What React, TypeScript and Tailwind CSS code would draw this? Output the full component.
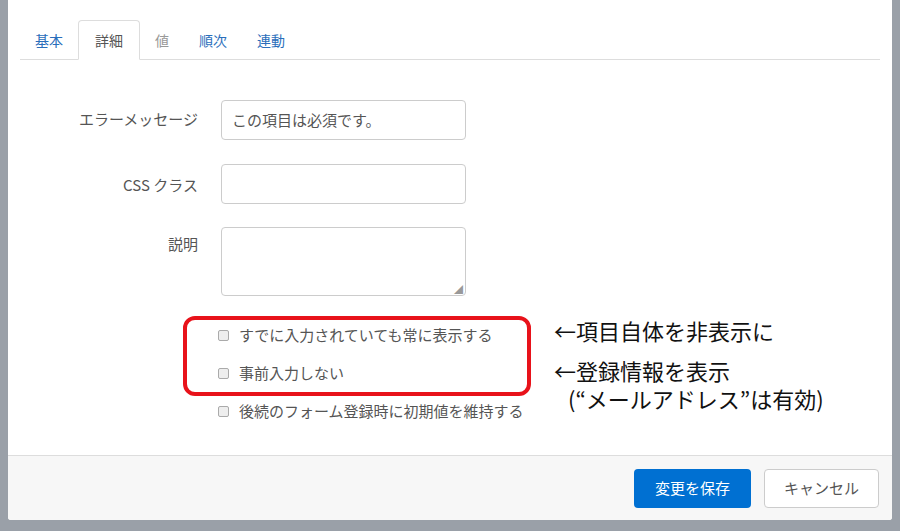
import React from "react";

const font = { fontFamily: '"Noto Sans CJK JP", "Noto Sans", sans-serif' };

function Check({ label }: { label: string }) {
  return (
    <div className="flex items-center h-[38px] text-[15px] text-[#555]">
      <span className="w-[11px] h-[11px] border border-[#aaa] bg-[#eee] rounded-[2px] mr-[10px]" />
      {label}
    </div>
  );
}

export default function App() {
  const tabs = ["基本", "詳細", "値", "順次", "連動"];
  return (
    <div style={font} className="w-[900px] h-[531px] bg-[#9aa0a8] relative overflow-hidden">
      <div className="absolute left-[8px] top-0 w-[884px] h-[520px] bg-white rounded-b-[3px] flex flex-col">
        <div className="mx-[12px] mt-[20px] flex border-b border-[#ddd] h-[40px]">
          {tabs.map((t, i) => (
            <div
              key={t}
              className={
                "px-[15px] flex items-center text-[14px] -mb-px " +
                (i === 1
                  ? "border border-[#ddd] border-b-white rounded-t-[4px] bg-white text-[#555] px-[16px]"
                  : i === 2
                  ? "text-[#999]"
                  : "text-[#2a6ebb]")
              }
            >
              {t}
            </div>
          ))}
        </div>
        <div className="flex-1 relative">
          <div className="grid grid-cols-[190px_245px] gap-x-[23px] mt-[40px] text-[15px] text-[#555]">
            <div className="text-right pt-[8px]">エラーメッセージ</div>
            <div className="h-[40px] border border-[#ccc] rounded-[4px] px-[10px] flex items-center">この項目は必須です。</div>
            <div className="text-right pt-[10px] mt-[24px]">CSS クラス</div>
            <div className="h-[40px] border border-[#ccc] rounded-[4px] mt-[24px]" />
            <div className="text-right pt-[6px] mt-[23px]">説明</div>
            <div className="h-[69px] border border-[#ccc] rounded-[4px] mt-[23px] relative">
              <span className="absolute right-[2px] bottom-[1px] text-[9px] leading-none text-[#999]">◢</span>
            </div>
          </div>
          <div className="ml-[210px] mt-[20px]">
            <Check label="すでに入力されていても常に表示する" />
            <Check label="事前入力しない" />
            <Check label="後続のフォーム登録時に初期値を維持する" />
          </div>
          <div className="absolute left-[175px] top-[256px] w-[348px] h-[80px] border-[4px] border-[#e8121a] rounded-[12px]" />
          <div className="absolute left-[546px] top-[255px] text-[22px] text-[#111] leading-[30px]">
            <div>←項目自体を非表示に</div>
            <div className="mt-[10px]">←登録情報を表示</div>
            <div className="pl-[14px] -mt-[2px]">(“メールアドレス”は有効)</div>
          </div>
        </div>
        <div className="h-[65px] bg-[#f7f7f7] border-t border-[#ddd] flex items-center justify-end gap-[13px] pr-[13px] rounded-b-[3px]">
          <div className="w-[117px] h-[39px] bg-[#0070d2] text-white rounded-[4px] flex items-center justify-center text-[15px]">変更を保存</div>
          <div className="w-[115px] h-[39px] bg-white border border-[#ccc] text-[#555] rounded-[4px] flex items-center justify-center text-[15px]">キャンセル</div>
        </div>
      </div>
    </div>
  );
}
